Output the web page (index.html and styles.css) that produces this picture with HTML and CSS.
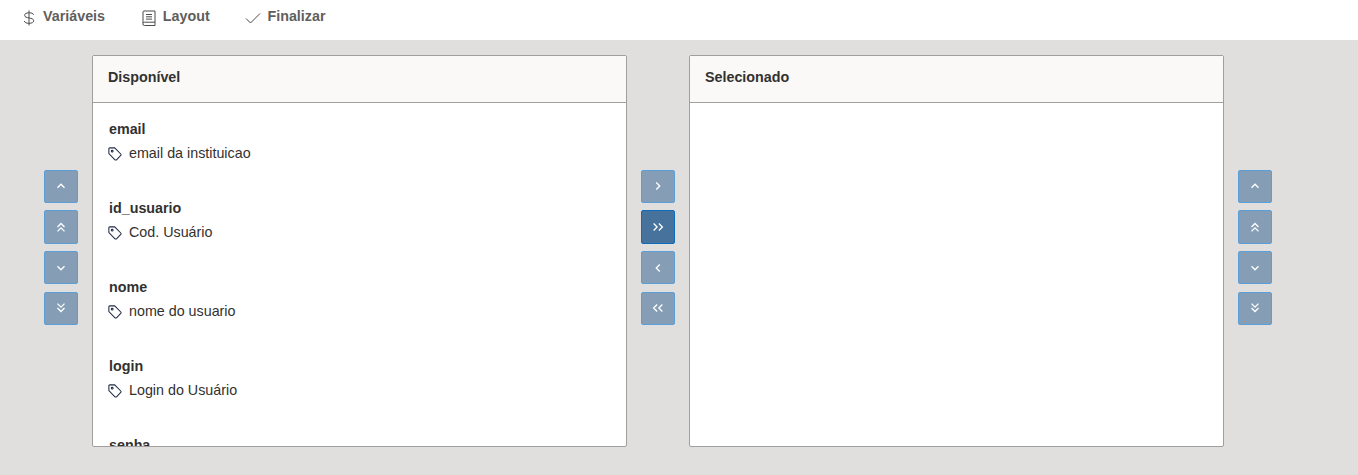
FILE: index.html
```html
<!DOCTYPE html>
<html lang="en">
<head>
  <meta charset="UTF-8">
  <title>Layout</title>
  <link rel="stylesheet" href="styles.css">
</head>
<body>
  <svg class="sprite" width="0" height="0">
    <symbol id="up" viewBox="0 0 16 16"><path d="M4 10l4-4 4 4"/></symbol>
    <symbol id="up2" viewBox="0 0 16 16"><path d="M4 8l4-4 4 4M4 13l4-4 4 4"/></symbol>
    <symbol id="down" viewBox="0 0 16 16"><path d="M4 6l4 4 4-4"/></symbol>
    <symbol id="down2" viewBox="0 0 16 16"><path d="M4 3l4 4 4-4M4 8l4 4 4-4"/></symbol>
    <symbol id="right" viewBox="0 0 16 16"><path d="M6 4l4 4-4 4"/></symbol>
    <symbol id="right2" viewBox="0 0 16 16"><path d="M3 4l4 4-4 4M9 4l4 4-4 4"/></symbol>
    <symbol id="left" viewBox="0 0 16 16"><path d="M10 4L6 8l4 4"/></symbol>
    <symbol id="left2" viewBox="0 0 16 16"><path d="M7 4L3 8l4 4M13 4L9 8l4 4"/></symbol>
    <symbol id="tag" viewBox="0 0 16 16"><path d="M1 2a1 1 0 0 1 1-1h5.6l7 7a1.2 1.2 0 0 1 0 1.7l-4.9 4.9a1.2 1.2 0 0 1-1.7 0l-7-7z"/><circle cx="4.8" cy="4.8" r="1"/></symbol>
  </svg>

  <!-- Steps -->
  <nav class="tabs">
    <a class="tab">
      <svg class="tab-icon" viewBox="0 0 16 16"><path d="M12.5 4.8C12.2 3.3 10.6 2.8 8 2.8c-2.7 0-4.4.9-4.4 2.5 0 3.7 9.1 1.6 9.1 5.5 0 1.6-1.9 2.5-4.7 2.5-2.6 0-4.3-.7-4.8-2.3M8 .5v2.3M8 13.3v2.2M8 2.8v10.5"/></svg>
      Variáveis
    </a>
    <a class="tab">
      <svg class="tab-icon" viewBox="0 0 16 16"><path d="M2 13.2V2a1 1 0 0 1 1-1h11v11.2H3.5a1.6 1.6 0 0 0 0 3.3H14v-3.3M5 4.5h6M5 6.8h6M5 9.1h6"/></svg>
      Layout
    </a>
    <a class="tab">
      <svg class="tab-icon" viewBox="0 0 16 16"><path d="M1 8.5l4.5 4.5L15 3.5"/></svg>
      Finalizar
    </a>
  </nav>

  <main class="picker">
    <div class="btn-col">
      <button class="btn"><svg><use href="#up"/></svg></button>
      <button class="btn"><svg><use href="#up2"/></svg></button>
      <button class="btn"><svg><use href="#down"/></svg></button>
      <button class="btn"><svg><use href="#down2"/></svg></button>
    </div>

    <section class="panel">
      <header class="panel-head">Disponível</header>
      <div class="panel-body">
        <div class="field">
          <strong>email</strong>
          <span class="field-label"><svg><use href="#tag"/></svg>email da instituicao</span>
        </div>
        <div class="field">
          <strong>id_usuario</strong>
          <span class="field-label"><svg><use href="#tag"/></svg>Cod. Usuário</span>
        </div>
        <div class="field">
          <strong>nome</strong>
          <span class="field-label"><svg><use href="#tag"/></svg>nome do usuario</span>
        </div>
        <div class="field">
          <strong>login</strong>
          <span class="field-label"><svg><use href="#tag"/></svg>Login do Usuário</span>
        </div>
        <div class="field">
          <strong>senha</strong>
          <span class="field-label"><svg><use href="#tag"/></svg>senha do usuario</span>
        </div>
      </div>
    </section>

    <div class="btn-col">
      <button class="btn"><svg><use href="#right"/></svg></button>
      <button class="btn btn-active"><svg><use href="#right2"/></svg></button>
      <button class="btn"><svg><use href="#left"/></svg></button>
      <button class="btn"><svg><use href="#left2"/></svg></button>
    </div>

    <section class="panel">
      <header class="panel-head">Selecionado</header>
      <div class="panel-body"></div>
    </section>

    <div class="btn-col">
      <button class="btn"><svg><use href="#up"/></svg></button>
      <button class="btn"><svg><use href="#up2"/></svg></button>
      <button class="btn"><svg><use href="#down"/></svg></button>
      <button class="btn"><svg><use href="#down2"/></svg></button>
    </div>
  </main>
</body>
</html>
```
FILE: styles.css
```css
html, body {
  height: 100%;
}

body {
  margin: 0;
  display: flex;
  flex-direction: column;
  overflow: hidden;
  font-family: "Liberation Sans", Arial, sans-serif;
  font-size: 14.3px;
  color: #323130;
  background-color: #e0dfdd;
}

.sprite {
  position: absolute;
}

svg {
  fill: none;
  stroke: currentColor;
}

/* Steps */
.tabs {
  height: 40px;
  flex: none;
  display: flex;
  align-items: flex-start;
  padding-left: 21px;
  background-color: #fff;
  box-sizing: border-box;
}

.tab {
  display: flex;
  align-items: center;
  gap: 6px;
  height: 32px;
  margin-right: 35.8px;
  font-weight: bold;
  color: #605e5c;
}

.tab-icon {
  width: 16px;
  height: 16px;
  margin-top: 3px;
  stroke-width: 1;
  color: #4a4a4a;
}

/* Picker */
.picker {
  flex: 1;
  min-height: 0;
  display: flex;
  gap: 14px;
  padding: 15px 0 28px 44px;
}

.btn-col {
  width: 34px;
  display: flex;
  flex-direction: column;
  gap: 7.37px;
  padding-top: 114.8px;
}

.btn {
  width: 34px;
  height: 33.3px;
  padding: 0;
  display: flex;
  align-items: center;
  justify-content: center;
  background-color: #859eb6;
  border: 1px solid #5a9fd8;
  border-radius: 2px;
  color: #fff;
}

.btn svg {
  width: 14px;
  height: 14px;
  stroke-width: 1.5;
}

.btn-active {
  background-color: #47729b;
  border-color: #0f6cbd;
}

.panel {
  width: 535px;
  box-sizing: border-box;
  display: flex;
  flex-direction: column;
  background-color: #fff;
  border: 1px solid #a19f9d;
  border-radius: 2px;
}

.panel-head {
  height: 47px;
  flex: none;
  box-sizing: border-box;
  padding: 13px 0 0 15px;
  line-height: 16px;
  font-weight: bold;
  background-color: #faf9f8;
  border-bottom: 1px solid #a19f9d;
}

.panel-body {
  flex: 1;
  min-height: 0;
  overflow: hidden;
  padding-top: 18px;
}

.field {
  height: 79px;
  padding-left: 16px;
}

.field strong {
  display: block;
  line-height: 16px;
}

.field-label {
  display: flex;
  align-items: center;
  gap: 7px;
  margin-top: 7px;
  line-height: 16px;
}

.field-label svg {
  width: 14px;
  height: 14px;
  margin-top: 3px;
  margin-left: -1px;
  stroke-width: 1.2;
  color: #1f2a44;
}
```
